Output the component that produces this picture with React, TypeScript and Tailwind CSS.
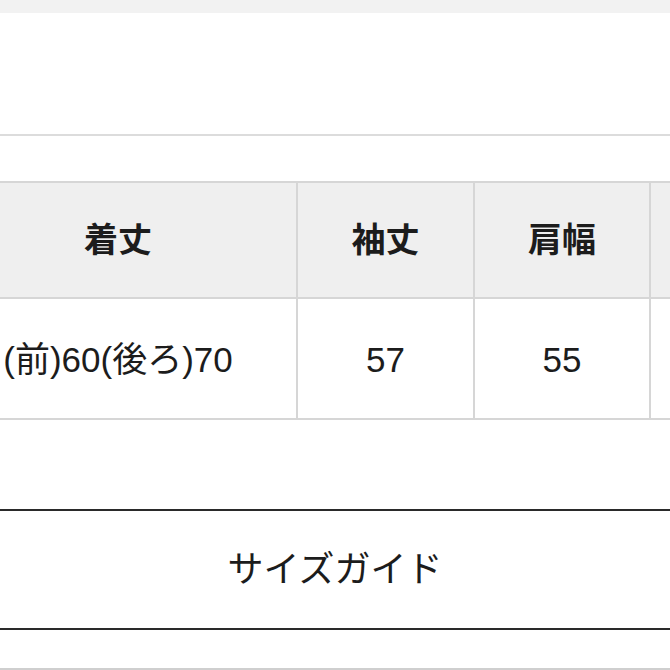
const font = "font-['Liberation_Sans','Noto_Sans_CJK_JP',sans-serif]";

const headers = ['着丈', '袖丈', '肩幅', ''];
const values = ['(前)60(後ろ)70', '57', '55', ''];
const widths = ['w-[358px] ml-[-60px]', 'w-[177px]', 'w-[176px]', 'w-[176px]'];

export default function App() {
  return (
    <div className={`w-[670px] h-[670px] overflow-hidden bg-white text-[#1c1c1c] ${font}`}>
      <div className="h-[13px] bg-[#f2f2f2]" />
      <div className="h-[121px]" />
      <div className="h-[2px] bg-[#dcdcdc]" />
      <div className="h-[45px]" />

      {/* size table */}
      <div className="border-t-2 border-b-2 border-[#d6d6d6]">
        <div className="flex h-[114px] bg-[#efefef]">
          {headers.map((h, i) => (
            <div
              key={i}
              className={`${widths[i]} shrink-0 flex items-center justify-center border-r-2 border-[#d6d6d6] text-[34px] font-bold`}
            >
              {h}
            </div>
          ))}
        </div>
        <div className="flex h-[121px] border-t-2 border-[#d6d6d6]">
          {values.map((v, i) => (
            <div
              key={i}
              className={`${widths[i]} shrink-0 flex items-center justify-center border-r-2 border-[#d6d6d6] text-[35px] pt-[4px]`}
            >
              {v}
            </div>
          ))}
        </div>
      </div>

      <div className="h-[89px]" />
      <button className="w-full h-[121px] border-y-2 border-[#2a2a2a] bg-white flex items-center justify-center text-[36px]">
        サイズガイド
      </button>
      <div className="h-[38px]" />
      <div className="h-[2px] bg-[#cfcfcf]" />
    </div>
  );
}
